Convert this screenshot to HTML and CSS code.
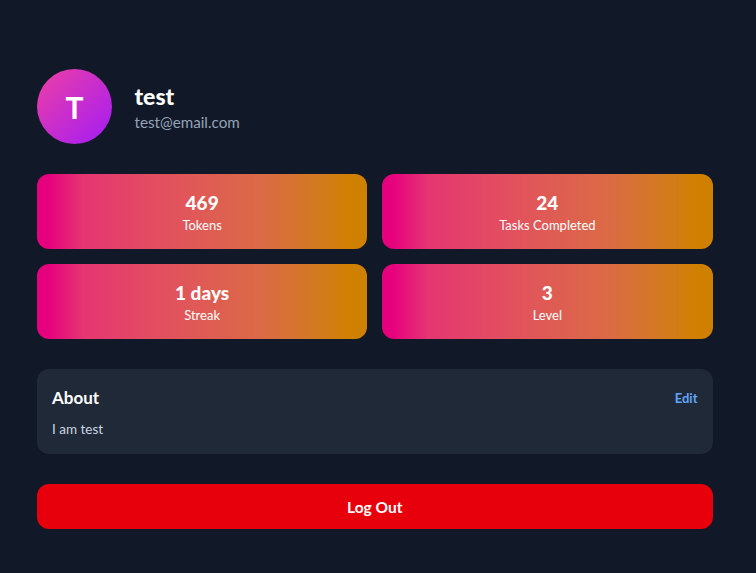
FILE: index.html
```html
<!DOCTYPE html>
<html lang="en">
<head>
<meta charset="utf-8">
<title>Profile</title>
<link rel="stylesheet" href="styles.css">
</head>
<body>
<main class="page">
  <header class="profile">
    <div class="avatar">T</div>
    <div class="identity">
      <h1 class="name">test</h1>
      <p class="email">test@email.com</p>
    </div>
  </header>
  <section class="stats">
    <div class="stat"><div class="stat-value">469</div><div class="stat-label">Tokens</div></div>
    <div class="stat"><div class="stat-value">24</div><div class="stat-label">Tasks Completed</div></div>
    <div class="stat"><div class="stat-value">1 days</div><div class="stat-label">Streak</div></div>
    <div class="stat"><div class="stat-value">3</div><div class="stat-label">Level</div></div>
  </section>
  <section class="about">
    <div class="about-head">
      <h2 class="about-title">About</h2>
      <button class="edit">Edit</button>
    </div>
    <p class="about-text">I am test</p>
  </section>
  <button class="logout">Log Out</button>
</main>
</body>
</html>
```
FILE: styles.css
```css
* { box-sizing: border-box; }
html, body { margin: 0; height: 100%; }
body {
  background: #111827;
  color: #fff;
  font-family: "Lato", sans-serif;
}
.page {
  padding: 69px 43.5px 0 37px;
  display: flex;
  flex-direction: column;
}
.profile {
  display: flex;
  align-items: center;
  gap: 22.5px;
  margin-bottom: 30px;
}
.avatar {
  width: 75px;
  height: 75px;
  border-radius: 50%;
  background: linear-gradient(135deg, #ee3fa5, #a21cf5);
  display: flex;
  align-items: center;
  justify-content: center;
  font-size: 30px;
  font-weight: 700;
}
.name {
  margin: 0;
  font-size: 23px;
  line-height: 30px;
  font-weight: 900;
}
.email {
  margin: 0;
  font-size: 15.2px;
  line-height: 22px;
  color: #94a3b8;
}
.stats {
  display: grid;
  grid-template-columns: 1fr 1fr;
  gap: 15px;
  margin-bottom: 30px;
}
.stat {
  height: 75px;
  border-radius: 12px;
  background: linear-gradient(90deg, #e6007e 3%, #e53572 14%, #e2505f 38%, #db6a46 68%, #d27a20 85%, #d08000 95%);
  display: flex;
  flex-direction: column;
  align-items: center;
  justify-content: center;
}
.stat-value {
  font-size: 19px;
  line-height: 26px;
  font-weight: 900;
  padding-top: 1.5px;
}
.stat-label {
  font-size: 13px;
  line-height: 20px;
  margin-top: -1px;
}
.about {
  height: 85px;
  background: #1f2937;
  border-radius: 12px;
  padding: 15px;
  margin-bottom: 30px;
}
.about-head {
  display: flex;
  justify-content: space-between;
  align-items: center;
  margin-bottom: 7px;
}
.about-title {
  margin: 0;
  font-size: 17px;
  line-height: 28px;
  font-weight: 700;
}
.edit {
  background: none;
  border: 0;
  padding: 0;
  font: 700 13px/20px "Lato", sans-serif;
  color: #60a5fa;
}
.about-text {
  margin: 0;
  font-size: 13.5px;
  line-height: 20px;
  color: #cbd5e1;
}
.logout {
  height: 45px;
  border: 0;
  border-radius: 12px;
  background: #e7000b;
  color: #fff;
  font: 700 15.5px/22px "Lato", sans-serif;
}
```
